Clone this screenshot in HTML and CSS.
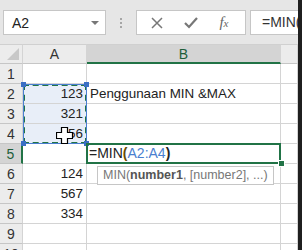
FILE: index.html
```html
<!DOCTYPE html>
<html lang="en">
<head>
    <meta charset="UTF-8">
    <title>MIN MAX</title>
    <link rel="stylesheet" href="styles.css">
</head>
<body>
    <div class="window">
        <div class="main">
            <div class="toolbar">
                <div class="namebox">
                    <span>A2</span>
                    <span class="caret"></span>
                </div>
                <div class="grip"><i></i><i></i><i></i></div>
                <div class="buttons">
                    <svg class="icon" width="12" height="12" viewBox="0 0 12 12"><path d="M1 1 L11 11 M11 1 L1 11" stroke="#777" stroke-width="1.5" fill="none"/></svg>
                    <svg class="icon" width="14" height="12" viewBox="0 0 14 12"><path d="M1 6 L5 10 L13 1" stroke="#777" stroke-width="2.2" fill="none"/></svg>
                    <span class="fx">f<small>x</small></span>
                </div>
                <div class="formula">=MIN(<span class="ref">A2:A4)</span></div>
            </div>

            <div class="sheet">
                <div class="corner"><span></span></div>
                <div class="colhead">A</div>
                <div class="colhead sel">B</div>
                <div class="colhead"></div>

                <div class="rowhead">1</div><div class="cell"></div><div class="cell"></div><div class="cell"></div>
                <div class="rowhead">2</div><div class="cell num hl">123</div><div class="cell">Penggunaan MIN &amp;MAX</div><div class="cell"></div>
                <div class="rowhead">3</div><div class="cell num hl">321</div><div class="cell"></div><div class="cell"></div>
                <div class="rowhead">4</div><div class="cell num hl">456</div><div class="cell"></div><div class="cell"></div>
                <div class="rowhead sel">5</div><div class="cell"></div><div class="cell active">=MIN<b class="paren">(</b><span class="ref">A2:A4</span><b>)</b></div><div class="cell"></div>
                <div class="rowhead">6</div><div class="cell num">124</div><div class="cell"></div><div class="cell"></div>
                <div class="rowhead">7</div><div class="cell num">567</div><div class="cell"></div><div class="cell"></div>
                <div class="rowhead">8</div><div class="cell num">334</div><div class="cell"></div><div class="cell"></div>
                <div class="rowhead">9</div><div class="cell"></div><div class="cell"></div><div class="cell"></div>
                <div class="rowhead">10</div><div class="cell"></div><div class="cell"></div><div class="cell"></div>

                <div class="marquee">
                    <span class="handle tl"></span><span class="handle tr"></span>
                    <span class="handle bl"></span><span class="handle br"></span>
                </div>
                <div class="fillhandle"></div>
                <div class="tip">MIN(<b>number1</b>, [number2], ...)</div>
                <svg class="cursor" width="17" height="17" viewBox="0 0 17 17">
                    <path d="M5.5 0.5 H11.5 V5.5 H16.5 V11.5 H11.5 V16.5 H5.5 V11.5 H0.5 V5.5 H5.5 Z" fill="#fff" stroke="#000" stroke-width="1.2"/>
                </svg>
            </div>
        </div>
        <div class="edge"></div>
    </div>
</body>
</html>
```

FILE: styles.css
```css
body {
    margin: 0;
    font-family: "Liberation Sans", Arial, sans-serif;
    background: #fff;
}
.window {
    display: flex;
    width: 302px;
    height: 250px;
    overflow: hidden;
}
.main {
    width: 298px;
    flex: none;
}
.edge {
    flex: 1;
    background: #1f1f1f;
}
.toolbar {
    height: 44px;
    background: #e6e6e6;
    display: flex;
    align-items: center;
    padding-left: 3px;
    box-sizing: border-box;
    padding-top: 1px;
}
.namebox {
    width: 103px;
    height: 25px;
    box-sizing: border-box;
    background: #fff;
    border: 1px solid #c6c6c6;
    display: flex;
    align-items: center;
    justify-content: space-between;
    padding: 0 6px 0 8px;
    font-size: 14px;
    color: #222;
}
.caret {
    width: 0;
    height: 0;
    border-left: 4px solid transparent;
    border-right: 4px solid transparent;
    border-top: 4px solid #777;
}
.grip {
    width: 30px;
    display: flex;
    flex-direction: column;
    align-items: center;
    gap: 2px;
}
.grip i {
    width: 2px;
    height: 2px;
    background: #a6a6a6;
}
.buttons {
    width: 110px;
    height: 25px;
    box-sizing: border-box;
    background: #fff;
    border: 1px solid #c6c6c6;
    display: flex;
    align-items: center;
    justify-content: space-around;
    padding: 0 6px 0 4px;
}
.fx {
    font-family: "Liberation Serif", serif;
    font-style: italic;
    font-size: 15px;
    color: #666;
}
.fx small {
    font-size: 11px;
}
.formula {
    margin-left: 4px;
    flex: 1;
    height: 25px;
    box-sizing: border-box;
    background: #fff;
    border: 1px solid #c6c6c6;
    border-right: none;
    padding-left: 11px;
    font-size: 14px;
    line-height: 23px;
    color: #333;
    white-space: nowrap;
    overflow: hidden;
}
.ref {
    color: #4a7fd0;
}
.sheet {
    position: relative;
    display: grid;
    grid-template-columns: 23px 64px 194px 17px;
    grid-auto-rows: 20px;
    border-left: 1px solid #333;
    margin-left: -1px;
    font-size: 13.4px;
    color: #222;
}
.corner, .colhead, .rowhead {
    background: #ececec;
    border-right: 1px solid #d4d4d4;
    border-bottom: 1px solid #c6c6c6;
    box-sizing: border-box;
    color: #333;
}
.corner {
    position: relative;
    border-top: 1px solid #d0d0d0;
}
.corner span {
    position: absolute;
    right: 3px;
    bottom: 3px;
    width: 0;
    height: 0;
    border-left: 12px solid transparent;
    border-bottom: 12px solid #c8c8c8;
}
.colhead {
    border-top: 1px solid #d0d0d0;
    display: flex;
    align-items: center;
    justify-content: center;
    font-size: 14px;
}
.colhead.sel {
    background: #d4d4d4;
    border-bottom: 2px solid #217346;
    color: #1d5e3a;
}
.rowhead {
    display: flex;
    align-items: center;
    justify-content: center;
    font-size: 14px;
}
.rowhead.sel {
    background: #d4d4d4;
    border-right: 2px solid #217346;
    color: #1d5e3a;
}
.cell {
    border-right: 1px solid #d4d4d4;
    border-bottom: 1px solid #d4d4d4;
    box-sizing: border-box;
    padding: 0 3px;
    line-height: 19px;
    white-space: nowrap;
    overflow: visible;
}
.num {
    text-align: right;
}
.hl {
    background: #e8eef8;
}
.cell.active {
    border: 2px solid #217346;
    margin: -1px 0 0 -1px;
    width: calc(100% + 1px);
    height: 21px;
    font-size: 14px;
    line-height: 16px;
    padding-left: 1px;
    position: relative;
    z-index: 1;
}
.paren {
    color: #6b4a00;
}
.marquee {
    position: absolute;
    left: 23px;
    top: 40px;
    width: 64px;
    height: 60px;
    box-sizing: border-box;
    border: 2px dashed #217346;
    outline: 1px solid #4a7fd0;
    outline-offset: -1px;
}
.handle {
    position: absolute;
    width: 5px;
    height: 5px;
    background: #3b6fc4;
}
.handle.tl { left: -4px; top: -4px; }
.handle.tr { right: -4px; top: -4px; }
.handle.bl { left: -4px; bottom: -4px; }
.handle.br { right: -4px; bottom: -4px; }
.fillhandle {
    position: absolute;
    left: 278px;
    top: 116px;
    width: 5px;
    height: 5px;
    background: #217346;
    border: 1px solid #fff;
    z-index: 2;
}
.tip {
    position: absolute;
    left: 97px;
    top: 122px;
    height: 19px;
    box-sizing: border-box;
    padding: 0 5px;
    background: #fff;
    border: 1px solid #c6c6c6;
    font-size: 12.5px;
    line-height: 17px;
    color: #777;
    white-space: nowrap;
    z-index: 3;
}
.tip b {
    color: #555;
}
.cursor {
    position: absolute;
    left: 56px;
    top: 83px;
    z-index: 4;
}
```
